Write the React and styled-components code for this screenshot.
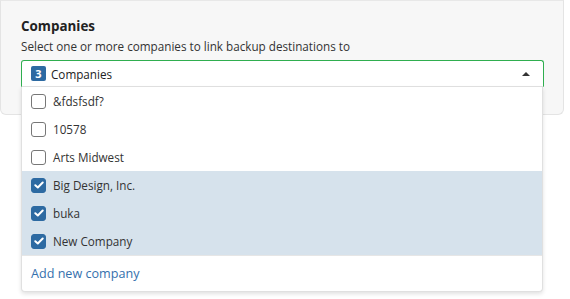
import React from "react";
import styled, { createGlobalStyle } from "styled-components";

const Global = createGlobalStyle`
  html, body, #root { margin: 0; padding: 0; background: #fff; min-height: 100%; height: 100%; }
  body { font-family: "Open Sans", "Noto Sans", sans-serif; color: #333; }
  * { box-sizing: border-box; }
`;

const Page = styled.div`
  min-height: 299px;
  height: 100%;
  position: relative;
`;

const Panel = styled.div`
  width: 564px;
  height: 115px;
  background: #f7f7f7;
  border: 1px solid #e4e4e4;
  border-top-color: #e8e8e8;
  border-radius: 0 0 6px 6px;
  padding: 16px 20px 0 20px;
`;

const Title = styled.div`
  font-size: 13.4px;
  font-weight: 700;
  color: #222;
  line-height: 18px;
`;

const Desc = styled.div`
  font-size: 11.7px;
  color: #333;
  line-height: 17px;
  margin-top: 3px;
`;

const Field = styled.div`
  position: relative;
  margin-top: 5px;
  width: 523px;
`;

const Select = styled.div`
  height: 27px;
  background: #fff;
  border: 1px solid #2fae4f;
  border-bottom-color: #e2e2e2;
  border-radius: 3px 3px 0 0;
  display: flex;
  align-items: center;
  padding: 0 10px 0 9px;
  gap: 5px;
  font-size: 11.7px;
  color: #222;
`;

const Badge = styled.span`
  width: 15px;
  height: 15px;
  border-radius: 2px;
  background: #2d6aa2;
  color: #fff;
  font-weight: 700;
  font-size: 11px;
  display: inline-flex;
  align-items: center;
  justify-content: center;
`;

const Label = styled.span`
  flex: 1;
`;

const Caret = styled.span`
  width: 0;
  height: 0;
  border-left: 4px solid transparent;
  border-right: 4px solid transparent;
  border-bottom: 4px solid #333;
  margin-right: 3px;
`;

const Menu = styled.div`
  position: absolute;
  z-index: 10;
  left: 0;
  top: 27px;
  width: 522px;
  background: #fff;
  border: 1px solid #e0e0e0;
  border-top: none;
  border-radius: 0 0 4px 4px;
  box-shadow: 0 2px 4px rgba(0, 0, 0, 0.12);
  overflow: hidden;
`;

const Item = styled.div`
  height: 28px;
  display: flex;
  align-items: center;
  gap: 7px;
  padding-left: 9px;
  font-size: 11.7px;
  color: #333;
  background: ${(p) => (p.$checked ? "#d6e2ec" : "#fff")};
`;

const Box = styled.span`
  width: 15px;
  height: 15px;
  border-radius: 3px;
  border: 1px solid ${(p) => (p.$checked ? "#2d6aa2" : "#777")};
  background: ${(p) => (p.$checked ? "#2d6aa2" : "#fff")};
  display: inline-flex;
  align-items: center;
  justify-content: center;
`;

const Footer = styled.div`
  height: 36px;
  display: flex;
  align-items: center;
  padding-left: 9px;
  font-size: 12.6px;
  color: #3570ad;
  border-top: 1px solid #e6e6e6;
`;

const items = [
  { name: "&fdsfsdf?", checked: false },
  { name: "10578", checked: false },
  { name: "Arts Midwest", checked: false },
  { name: "Big Design, Inc.", checked: true },
  { name: "buka", checked: true },
  { name: "New Company", checked: true },
];

export default function App() {
  return (
    <Page>
      <Global />
      <Panel>
        <Title>Companies</Title>
        <Desc>Select one or more companies to link backup destinations to</Desc>
        <Field>
          <Select>
            <Badge>3</Badge>
            <Label>Companies</Label>
            <Caret />
          </Select>
          <Menu>
            {items.map((it) => (
              <Item key={it.name} $checked={it.checked}>
                <Box $checked={it.checked}>
                  {it.checked && (
                    <svg width="10" height="8" viewBox="0 0 10 8">
                      <path d="M1.3 4.2 L3.8 6.5 L8.7 1.5" fill="none" stroke="#fff" strokeWidth="2" strokeLinecap="round" strokeLinejoin="round" />
                    </svg>
                  )}
                </Box>
                {it.name}
              </Item>
            ))}
            <Footer>Add new company</Footer>
          </Menu>
        </Field>
      </Panel>
    </Page>
  );
}
